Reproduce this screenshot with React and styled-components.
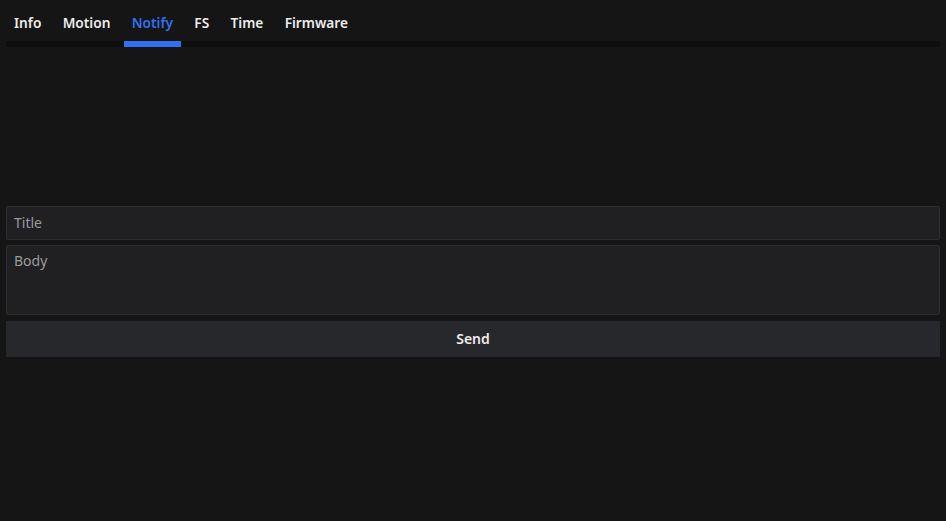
import React, { useState } from "react";
import styled, { createGlobalStyle } from "styled-components";

const Global = createGlobalStyle`
  html, body { margin: 0; padding: 0; background: #151515; }
  body { font-family: "Noto Sans", "Open Sans", sans-serif; color: #e6e6e6; }
  * { box-sizing: border-box; }
`;

const Page = styled.div`
  padding: 6px;
  min-height: 521px;
  background: #151515;
`;

const TabBar = styled.div`
  display: flex;
  gap: 5.3px;
  border-bottom: 6px solid #0e0e0e;
`;

const Tab = styled.button`
  appearance: none;
  background: none;
  border: none;
  border-bottom: 6px solid ${(p) => (p.$active ? "#2f6ff0" : "transparent")};
  margin-bottom: -6px;
  height: 41px;
  padding: 0 8px 2px;
  font-family: inherit;
  font-size: 13.7px;
  font-weight: 600;
  color: ${(p) => (p.$active ? "#2f6ff0" : "#ececec")};
  cursor: pointer;
`;

const Panel = styled.div`
  display: flex;
  flex-direction: column;
  gap: 5px;
  margin-top: 159px;
`;

const field = `
  width: 100%;
  background: #202022;
  border: 1px solid #2e2e2f;
  border-radius: 2px;
  color: #e6e6e6;
  font-family: "Noto Sans", "Open Sans", sans-serif;
  font-size: 14px;
  padding: 0 7px;
  outline: none;
  &::placeholder { color: #9b9b9d; }
`;

const Input = styled.input`
  ${field}
  height: 34px;
  padding-bottom: 2px;
`;

const TextArea = styled.textarea`
  ${field}
  height: 70px;
  padding-top: 5px;
  resize: none;
  display: block;
`;

const SendButton = styled.button`
  width: 100%;
  height: 36px;
  margin-top: 1px;
  padding: 0 0 2px;
  background: #27282c;
  border: none;
  border-radius: 1px;
  color: #ececec;
  font-family: inherit;
  font-size: 14px;
  font-weight: 600;
  cursor: pointer;
`;

const tabs = ["Info", "Motion", "Notify", "FS", "Time", "Firmware"];

export default function App() {
  const [active, setActive] = useState("Notify");
  return (
    <Page>
      <Global />
      <TabBar>
        {tabs.map((t) => (
          <Tab key={t} $active={t === active} onClick={() => setActive(t)}>
            {t}
          </Tab>
        ))}
      </TabBar>
      <Panel>
        <Input placeholder="Title" />
        <TextArea placeholder="Body" />
        <SendButton>Send</SendButton>
      </Panel>
    </Page>
  );
}
